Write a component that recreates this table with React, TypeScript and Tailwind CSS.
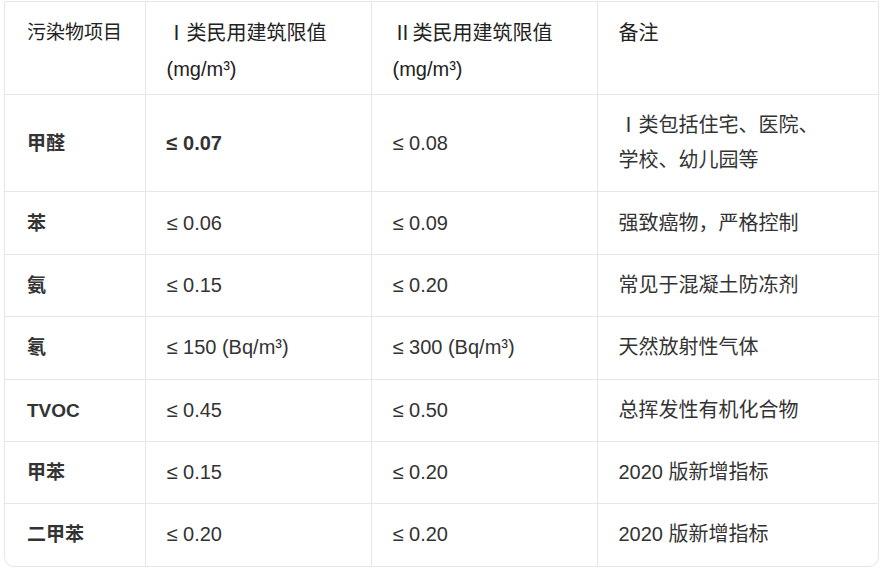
import React from "react";

const rows: { name: string; a: string; b: string; note: React.ReactNode; boldA?: boolean }[] = [
  { name: "甲醛", a: "≤ 0.07", b: "≤ 0.08", note: <>Ⅰ类包括住宅、医院、<br />学校、幼儿园等</>, boldA: true },
  { name: "苯", a: "≤ 0.06", b: "≤ 0.09", note: "强致癌物，严格控制" },
  { name: "氨", a: "≤ 0.15", b: "≤ 0.20", note: "常见于混凝土防冻剂" },
  { name: "氡", a: "≤ 150 (Bq/m³)", b: "≤ 300 (Bq/m³)", note: "天然放射性气体" },
  { name: "TVOC", a: "≤ 0.45", b: "≤ 0.50", note: "总挥发性有机化合物" },
  { name: "甲苯", a: "≤ 0.15", b: "≤ 0.20", note: "2020 版新增指标" },
  { name: "二甲苯", a: "≤ 0.20", b: "≤ 0.20", note: "2020 版新增指标" },
];

export default function App() {
  return (
    <div
      className="w-[885px] h-[570px] bg-white pl-1 pr-[6px] pt-px overflow-hidden"
      style={{ fontFamily: '"Liberation Sans", "Noto Sans CJK SC", sans-serif' }}
    >
      <div className="border border-[#e6e6e6] rounded-b-[10px] overflow-hidden">
        <table className="w-full table-fixed border-collapse text-[20px] leading-[35px] text-[#333]">
          <colgroup>
            <col className="w-[140px]" />
            <col className="w-[226px]" />
            <col className="w-[226px]" />
            <col />
          </colgroup>
          <thead>
            <tr className="border-b border-[#e6e6e6]">
              <th className="text-left align-top font-normal text-[19px] whitespace-nowrap leading-[36px] text-[#222] pl-[22px] pr-[10px] pt-[13px] pb-[7px] border-r border-[#e6e6e6]">污染物项目</th>
              <th className="text-left align-top font-normal leading-[36px] text-[#222] px-[21px] pt-[13px] pb-[7px] border-r border-[#e6e6e6]">Ⅰ类民用建筑限值<br />(mg/m³)</th>
              <th className="text-left align-top font-normal leading-[36px] text-[#222] px-[21px] pt-[13px] pb-[7px] border-r border-[#e6e6e6]">Ⅱ类民用建筑限值<br />(mg/m³)</th>
              <th className="text-left align-top font-normal leading-[36px] text-[#222] px-[21px] pt-[13px] pb-[7px]">备注</th>
            </tr>
          </thead>
          <tbody>
            {rows.map((r, i) => (
              <tr key={i} className={i < rows.length - 1 ? "border-b border-[#e6e6e6]" : ""}>
                <td className="pl-[22px] pr-[21px] py-[13.2px] text-[19px] font-bold border-r border-[#e6e6e6]">{r.name}</td>
                <td className={`px-[21px] py-[13.2px] border-r border-[#e6e6e6] ${r.boldA ? "font-bold" : ""}`}>{r.a}</td>
                <td className="px-[21px] py-[13.2px] border-r border-[#e6e6e6]">{r.b}</td>
                <td className="px-[21px] py-[13.2px]">{r.note}</td>
              </tr>
            ))}
          </tbody>
        </table>
      </div>
    </div>
  );
}
